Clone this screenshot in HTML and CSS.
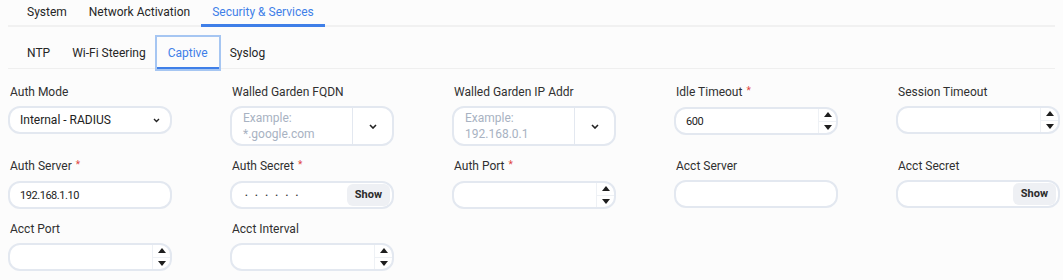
FILE: index.html
```html
<!DOCTYPE html>
<html lang="en">
<head>
<meta charset="utf-8">
<title>Captive</title>
<link rel="stylesheet" href="styles.css">
</head>
<body>
<div class="page">
  <nav class="tabs tabs-top">
    <span class="tab">System</span>
    <span class="tab">Network Activation</span>
    <span class="tab active">Security &amp; Services</span>
  </nav>
  <nav class="tabs tabs-sub">
    <span class="tab">NTP</span>
    <span class="tab">Wi-Fi Steering</span>
    <span class="tab active">Captive</span>
    <span class="tab">Syslog</span>
  </nav>

  <div class="form">
    <div class="field">
      <div class="label">Auth Mode</div>
      <div class="control select">
        <span class="value">Internal - RADIUS</span>
        <svg class="chev" width="7" height="5" viewBox="0 0 7 5"><path d="M1 1l2.5 2.5L6 1" fill="none" stroke="#222" stroke-width="1.4"/></svg>
      </div>
    </div>

    <div class="field">
      <div class="label">Walled Garden FQDN</div>
      <div class="control combo">
        <span class="placeholder">Example:<br>*.google.com</span>
        <span class="combo-btn"><svg width="8" height="5" viewBox="0 0 8 5"><path d="M1 1l3 3 3-3" fill="none" stroke="#222" stroke-width="1.6"/></svg></span>
      </div>
    </div>

    <div class="field">
      <div class="label">Walled Garden IP Addr</div>
      <div class="control combo">
        <span class="placeholder">Example:<br>192.168.0.1</span>
        <span class="combo-btn"><svg width="8" height="5" viewBox="0 0 8 5"><path d="M1 1l3 3 3-3" fill="none" stroke="#222" stroke-width="1.6"/></svg></span>
      </div>
    </div>

    <div class="field">
      <div class="label">Idle Timeout <span class="req">*</span></div>
      <div class="control number">
        <span class="value num">600</span>
        <span class="spin"><span class="up"></span><span class="down"></span></span>
      </div>
    </div>

    <div class="field">
      <div class="label">Session Timeout</div>
      <div class="control number">
        <span class="value num"></span>
        <span class="spin"><span class="up"></span><span class="down"></span></span>
      </div>
    </div>

    <div class="field">
      <div class="label">Auth Server <span class="req">*</span></div>
      <div class="control text">
        <span class="value num">192.168.1.10</span>
      </div>
    </div>

    <div class="field">
      <div class="label">Auth Secret <span class="req">*</span></div>
      <div class="control secret">
        <span class="dots">••••••</span>
        <span class="show">Show</span>
      </div>
    </div>

    <div class="field">
      <div class="label">Auth Port <span class="req">*</span></div>
      <div class="control number">
        <span class="value num"></span>
        <span class="spin"><span class="up"></span><span class="down"></span></span>
      </div>
    </div>

    <div class="field">
      <div class="label">Acct Server</div>
      <div class="control text">
        <span class="value num"></span>
      </div>
    </div>

    <div class="field">
      <div class="label">Acct Secret</div>
      <div class="control secret">
        <span class="dots"></span>
        <span class="show">Show</span>
      </div>
    </div>

    <div class="field">
      <div class="label">Acct Port</div>
      <div class="control number">
        <span class="value num"></span>
        <span class="spin"><span class="up"></span><span class="down"></span></span>
      </div>
    </div>

    <div class="field">
      <div class="label">Acct Interval</div>
      <div class="control number">
        <span class="value num"></span>
        <span class="spin"><span class="up"></span><span class="down"></span></span>
      </div>
    </div>
  </div>
</div>
</body>
</html>
```
FILE: styles.css
```css
html { overflow: hidden; }
body {
  margin: 0;
  background: #fcfcfc;
  font-family: Roboto, "Liberation Sans", sans-serif;
  font-size: 12px;
  color: #2a2a2a;
}
.page { padding: 0 8px; }

.tabs {
  display: flex;
  padding-left: 8px;
}
.tab {
  padding: 0 11px;
  white-space: nowrap;
  color: #262626;
}
.tab.active { color: #3f7fe8; }

.tabs-top {
  box-shadow: inset 0 -2px 0 #f1f1f1;
}
.tabs-top .tab {
  line-height: 24px;
  border-bottom: 3px solid transparent;
}
.tabs-top .tab.active { border-bottom-color: #3f7fe8; }

.tabs-sub {
  margin-top: 10px;
  box-shadow: inset 0 -1px 0 #efefef;
}
.tabs-sub .tab {
  padding-top: 2px;
  line-height: 28px;
  border-bottom: 2px solid transparent;
}
.tabs-sub .tab.active {
  border-bottom-color: #3f7fe8;
  outline: 2px solid #a6c6f2;
}

.form {
  display: grid;
  grid-template-columns: repeat(5, 164px);
  column-gap: 58px;
  row-gap: 11px;
  align-items: start;
  padding-top: 14px;
}
.label {
  line-height: 18px;
  margin: 0 0 5px 2px;
  color: #303030;
  white-space: nowrap;
}
.req {
  color: #e0443e;
  font-size: 10px;
  position: relative;
  top: -2px;
  margin-left: 1px;
}

.control {
  box-sizing: border-box;
  height: 28px;
  border: 2px solid #e3e8f0;
  border-radius: 12px;
  background: #fff;
  display: flex;
  align-items: center;
  overflow: hidden;
}
.value {
  flex: 1;
  padding-left: 10px;
  color: #222;
  white-space: nowrap;
}
.num { font-size: 11px; letter-spacing: -0.45px; }

.select { padding-right: 10px; }
.select .value { padding-left: 10px; }

.combo {
  height: 40px;
}
.placeholder {
  flex: 1;
  padding-left: 11px;
  line-height: 16px;
  color: #a8b2c2;
}
.combo-btn {
  width: 39px;
  align-self: stretch;
  border-left: 1px solid #e3e8f0;
  display: flex;
  align-items: center;
  justify-content: center;
}

.spin {
  width: 17px;
  align-self: stretch;
  border-left: 1px solid #eef1f5;
  display: flex;
  flex-direction: column;
}
.spin .up, .spin .down {
  flex: 1;
  display: flex;
  align-items: center;
  justify-content: center;
}
.spin .up { border-bottom: 1px solid #eef1f5; }
.spin .up::before {
  content: "";
  border-left: 4px solid transparent;
  border-right: 4px solid transparent;
  border-bottom: 5px solid #1e1e1e;
}
.spin .down::before {
  content: "";
  border-left: 4px solid transparent;
  border-right: 4px solid transparent;
  border-top: 5px solid #1e1e1e;
}

.secret { padding-right: 2px; }
.dots {
  flex: 1;
  padding-left: 13px;
  font-size: 8px;
  letter-spacing: 7.4px;
  color: #333;
}
.show {
  background: #eef0f4;
  border-radius: 6px;
  padding: 0 8px;
  line-height: 22px;
  font-size: 11px;
  font-weight: 700;
  color: #2b2b2b;
}
```
